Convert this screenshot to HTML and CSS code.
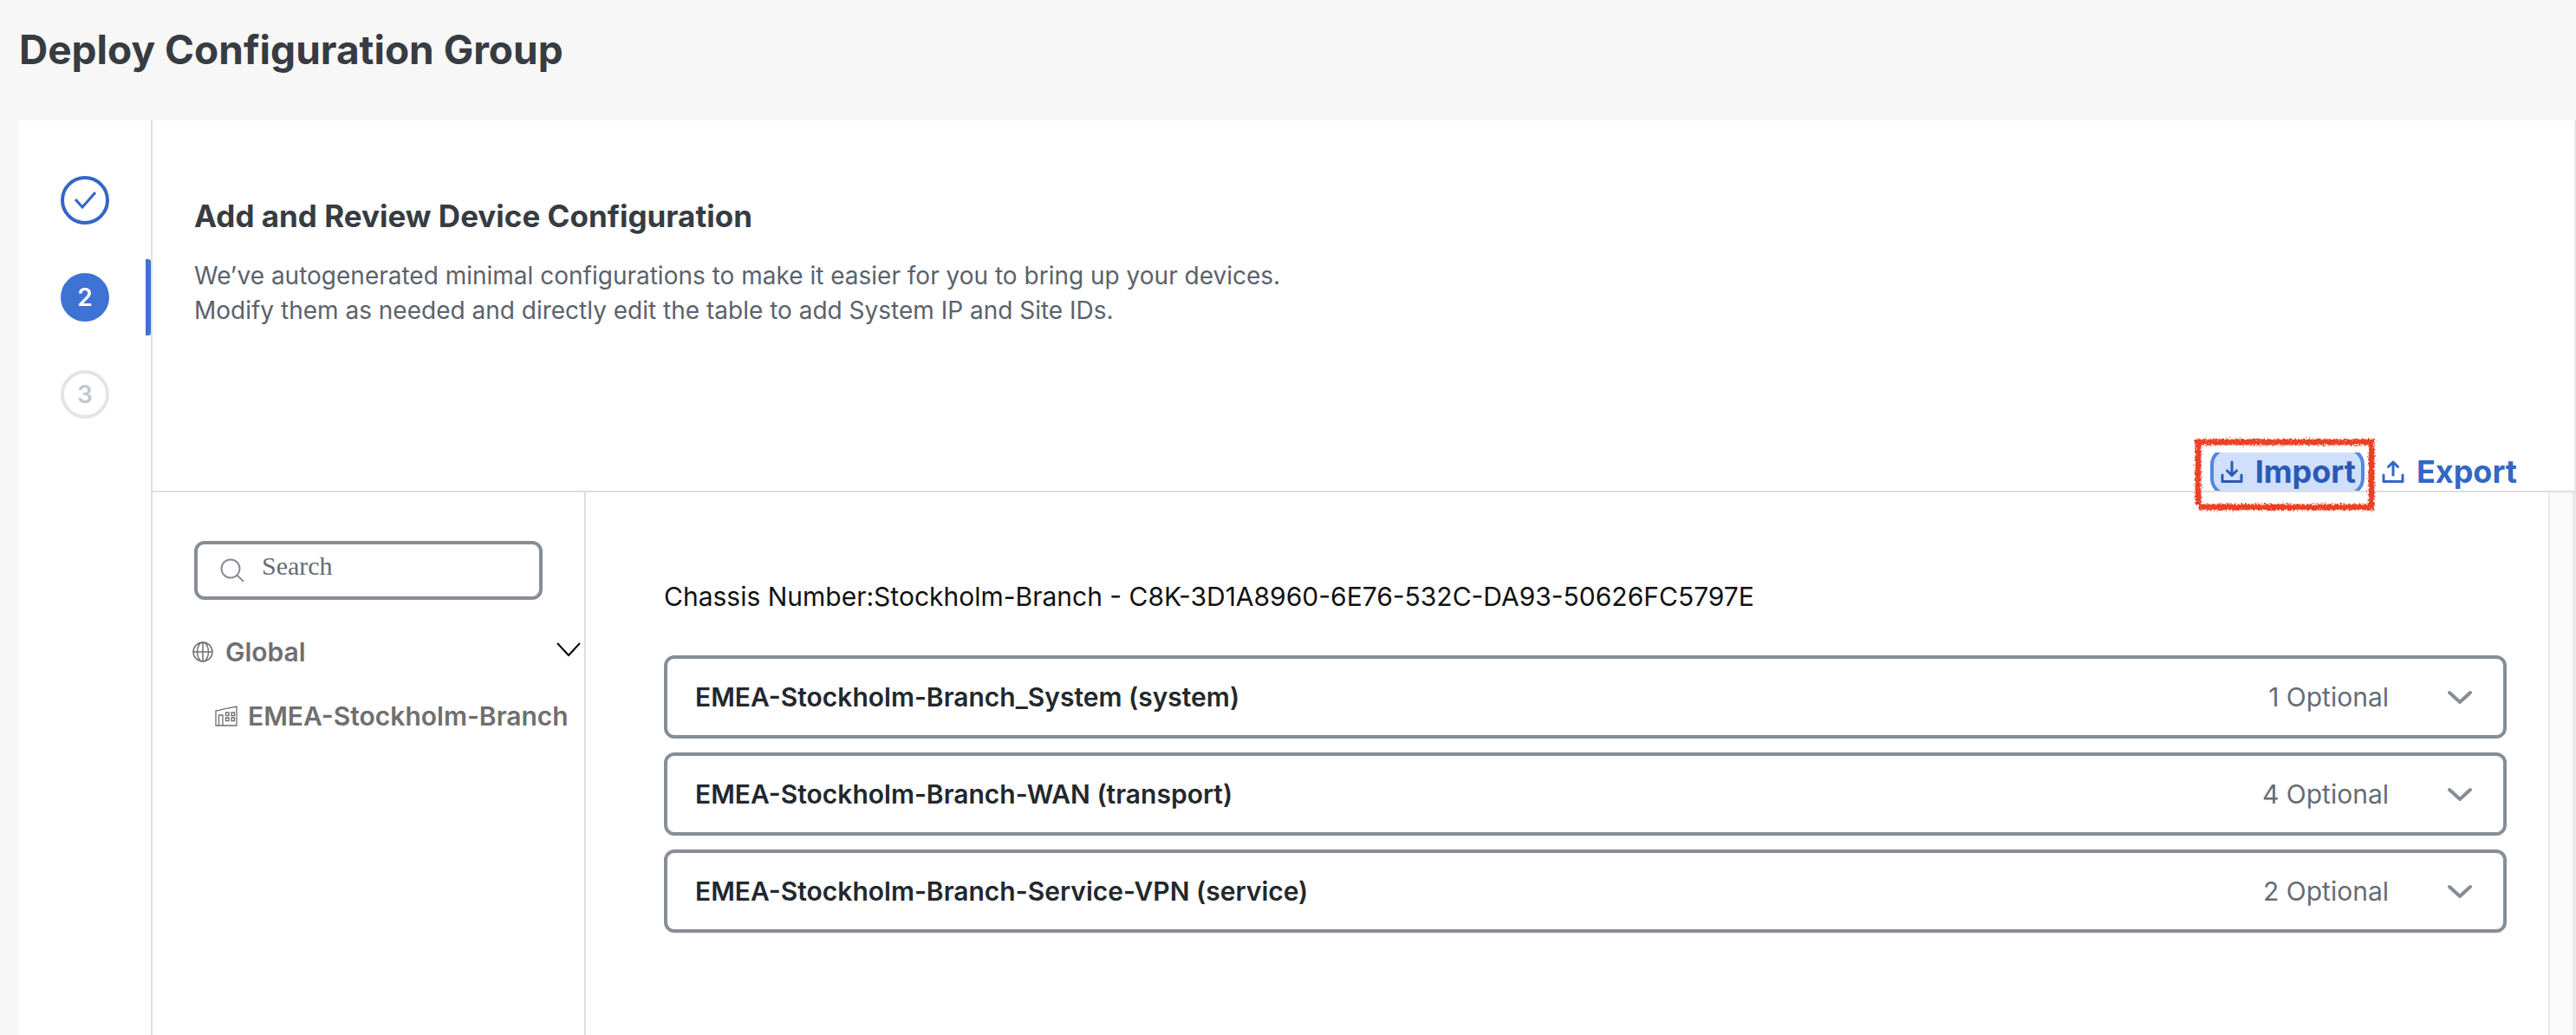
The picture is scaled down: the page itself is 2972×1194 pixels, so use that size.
FILE: index.html
```html
<!DOCTYPE html>
<html lang="en">
<head>
<meta charset="utf-8">
<title>Deploy Configuration Group</title>
<link rel="stylesheet" href="styles.css">
</head>
<body>
<header class="page-header">
  <h1>Deploy Configuration Group</h1>
</header>
<div class="wizard">
  <nav class="stepper" aria-label="Steps">
    <div class="step"><button class="dot done" type="button" aria-label="Step 1, done">
      <svg width="26" height="22" viewBox="0 0 26 22" fill="none" stroke="currentColor" stroke-width="3"><path d="M2 10 10 19 25 2"/></svg>
    </button></div>
    <div class="step active"><button class="dot current" type="button">2</button></div>
    <div class="step"><button class="dot todo" type="button">3</button></div>
  </nav>
  <main class="content">
    <section class="intro">
      <h2>Add and Review Device Configuration</h2>
      <p>We’ve autogenerated minimal configurations to make it easier for you to bring up your devices.<br>Modify them as needed and directly edit the table to add System IP and Site IDs.</p>
      <div class="actions">
        <div class="marked">
          <div class="clip">
            <button class="action focused" type="button">
              <svg width="26" height="26" viewBox="0 0 26 26" fill="none" stroke="currentColor" stroke-width="3" stroke-linecap="round" stroke-linejoin="round"><path d="M13 2V17M7.500 12 13 17.500 18.500 12M2 17V24.500H24V17"/></svg>
              Import
            </button>
          </div>
          <svg class="crayon" width="224" height="98" viewBox="0 0 224 98" fill="none" aria-hidden="true">
            <defs>
              <filter id="rough" x="-5%" y="-10%" width="110%" height="120%">
                <feTurbulence type="fractalNoise" baseFrequency="0.5" numOctaves="3" seed="4" result="n"/>
                <feDisplacementMap in="SourceGraphic" in2="n" scale="7" xChannelSelector="R" yChannelSelector="G"/>
              </filter>
            </defs>
            <path filter="url(#rough)" stroke="#ec4025" stroke-width="7" d="M8 12H215M212 9V86M215 87H13M12 9V84"/>
          </svg>
        </div>
        <button class="action" type="button">
          <svg width="26" height="26" viewBox="0 0 26 26" fill="none" stroke="currentColor" stroke-width="3" stroke-linecap="round" stroke-linejoin="round"><path d="M13 17V2M7.500 7.500 13 2 18.500 7.500M2 17V24.500H24V17"/></svg>
          Export
        </button>
      </div>
    </section>
    <div class="split">
      <aside class="tree">
        <label class="search">
          <svg width="28" height="28" viewBox="0 0 28 28" fill="none" stroke="currentColor" stroke-width="2"><circle cx="12" cy="12" r="10.500"/><path d="M19.500 19.500 27 27"/></svg>
          <input type="search" placeholder="Search" aria-label="Search">
        </label>
        <button class="node" type="button">
          <svg width="24" height="24" viewBox="0 0 24 24" fill="none" stroke="currentColor" stroke-width="1.500"><circle cx="12" cy="12" r="11"/><ellipse cx="12" cy="12" rx="6.500" ry="11"/><path d="M12 1V23M1 12H23"/></svg>
          <span>Global</span>
          <svg class="caret" width="28" height="24" viewBox="0 0 28 24" fill="none" stroke="#000" stroke-width="2"><path d="M1 2 14 16 27 2"/></svg>
        </button>
        <a class="node leaf" href="#branch">
          <svg width="26" height="24" viewBox="0 0 26 24" fill="none" stroke="currentColor" stroke-width="1.300"><path d="M1 23V6L25 1V23ZM4.500 23V11H9V23M12.500 8h3.500v3.500h-3.500zM19 8h3.500v3.500H19zM12.500 14h3.500v3.500h-3.500zM19 14h3.500v3.500H19z"/></svg>
          <span>EMEA-Stockholm-Branch</span>
        </a>
      </aside>
      <section class="device">
        <p class="chassis">Chassis Number:Stockholm-Branch - C8K-3D1A8960-6E76-532C-DA93-50626FC5797E</p>
        <div class="cards">
          <button class="card" type="button">
            <span class="name">EMEA-Stockholm-Branch_System (system)</span><span class="count">1 Optional</span>
            <svg width="28" height="16" viewBox="0 0 28 16" fill="none" stroke="#868d96" stroke-width="4" stroke-linecap="round"><path d="M2 3 14 14 26 3"/></svg>
          </button>
          <button class="card" type="button">
            <span class="name">EMEA-Stockholm-Branch-WAN (transport)</span><span class="count">4 Optional</span>
            <svg width="28" height="16" viewBox="0 0 28 16" fill="none" stroke="#868d96" stroke-width="4" stroke-linecap="round"><path d="M2 3 14 14 26 3"/></svg>
          </button>
          <button class="card" type="button">
            <span class="name">EMEA-Stockholm-Branch-Service-VPN (service)</span><span class="count">2 Optional</span>
            <svg width="28" height="16" viewBox="0 0 28 16" fill="none" stroke="#868d96" stroke-width="4" stroke-linecap="round"><path d="M2 3 14 14 26 3"/></svg>
          </button>
        </div>
      </section>
      <div class="gutter"></div>
    </div>
  </main>
</div>
</body>
</html>
```
FILE: styles.css
```css
* { box-sizing: border-box; }

body {
  margin: 0;
  min-height: 100vh;
  display: flex;
  flex-direction: column;
  background: #f7f7f7;
  color: #373c42;
  font-family: Inter, "Liberation Sans", sans-serif;
  font-size: 28px;
  line-height: 40px;
}

h1, h2, p { margin: 0; }

button {
  margin: 0;
  padding: 0;
  border: 0;
  background: none;
  color: inherit;
  font: inherit;
  cursor: pointer;
}

svg { flex: none; display: block; }

.page-header { padding: 27px 22px 52px; }

h1 { font-size: 46px; line-height: 60px; font-weight: 700; }

.wizard {
  flex: 1;
  display: flex;
  margin-left: 22px;
  background: #fff;
  border-right: 2px solid #e8e8e9;
}

.stepper {
  flex: none;
  width: 154px;
  padding-top: 48px;
  border-right: 2px solid #dfdfdf;
}

.step {
  height: 88px;
  margin-bottom: 24px;
  display: flex;
  align-items: center;
  justify-content: center;
  border-right: 6px solid transparent;
  padding-left: 6px;
}

.step.active {
  background: linear-gradient(#3e72d3, #3e72d3) right / 6px 100% no-repeat border-box;
  border-radius: 3px;
}

.dot {
  width: 56px;
  height: 56px;
  display: flex;
  align-items: center;
  justify-content: center;
  border: 4px solid #3367c6;
  border-radius: 50%;
  font-weight: 600;
}

.done { color: #3367c6; }
.current { background: #3e72d3; border-color: #3e72d3; color: #fff; }
.todo { border-color: #e3e4e8; color: #c3c6cb; }

.content { flex: 1; min-width: 0; display: flex; flex-direction: column; }

.intro {
  padding: 86px 62px 0 48px;
  border-bottom: 2px solid #dfdfdf;
}

.intro h2 { font-size: 35px; line-height: 48px; font-weight: 700; }

.intro p { margin-top: 25px; color: #5b626b; }

.actions {
  display: flex;
  justify-content: flex-end;
  align-items: center;
  margin-top: 144px;
  height: 44px;
}

.marked { position: relative; }

.clip {
  height: 44px;
  overflow: hidden;
  display: flex;
  align-items: center;
}

.action {
  flex: none;
  height: 56px;
  padding: 0 4px 0 20px;
  display: flex;
  align-items: center;
  gap: 14px;
  font-size: 36px;
  font-weight: 700;
  color: #3367c6;
}

.focused {
  padding: 0 6px 0 8px;
  border: 4px solid #5487df;
  border-radius: 20px;
  background: #d0dffb;
  color: #295ab5;
}

/* hand-drawn marker around the focused action */
.crayon { position: absolute; left: -26px; top: -24px; pointer-events: none; }

.split { flex: 1; display: flex; }

.tree {
  flex: none;
  width: 500px;
  padding: 56px 4px 0 46px;
  border-right: 2px solid #dfdfdf;
  font-size: 30px;
}

.search {
  display: flex;
  align-items: center;
  gap: 20px;
  width: 402px;
  height: 68px;
  margin-left: 2px;
  padding: 0 26px;
  border: 4px solid #868e96;
  border-radius: 12px;
  color: #868d96;
}

.search input {
  flex: 1;
  min-width: 0;
  height: 40px;
  padding: 0 0 10px;
  border: 0;
  outline: 0;
  background: none;
  font: 30px "Liberation Serif", serif;
}

.search input::placeholder { color: #656c76; opacity: 1; }

.node {
  display: flex;
  align-items: center;
  gap: 14px;
  width: 100%;
  margin-top: 40px;
  font-weight: 600;
  text-decoration: none;
  color: #6f6f6f;
}

.leaf { gap: 12px; margin-top: 34px; padding-left: 26px; }

.caret { margin-left: auto; }

.device {
  flex: 1;
  min-width: 0;
  padding: 100px 48px 48px 90px;
  font-size: 30px;
}

.chassis { color: #111; }

.cards { display: flex; flex-direction: column; gap: 16px; margin-top: 48px; }

.card {
  display: flex;
  align-items: center;
  height: 96px;
  padding: 0 36px 0 32px;
  border: 4px solid #868e96;
  border-radius: 12px;
  text-align: left;
}

.name { flex: 1; font-weight: 600; color: #23282e; }
.count { margin-right: 68px; color: #656c76; }

.gutter { flex: none; width: 30px; background: #fafafa; border: solid #e8e8e9; border-width: 0 2px; }
```
